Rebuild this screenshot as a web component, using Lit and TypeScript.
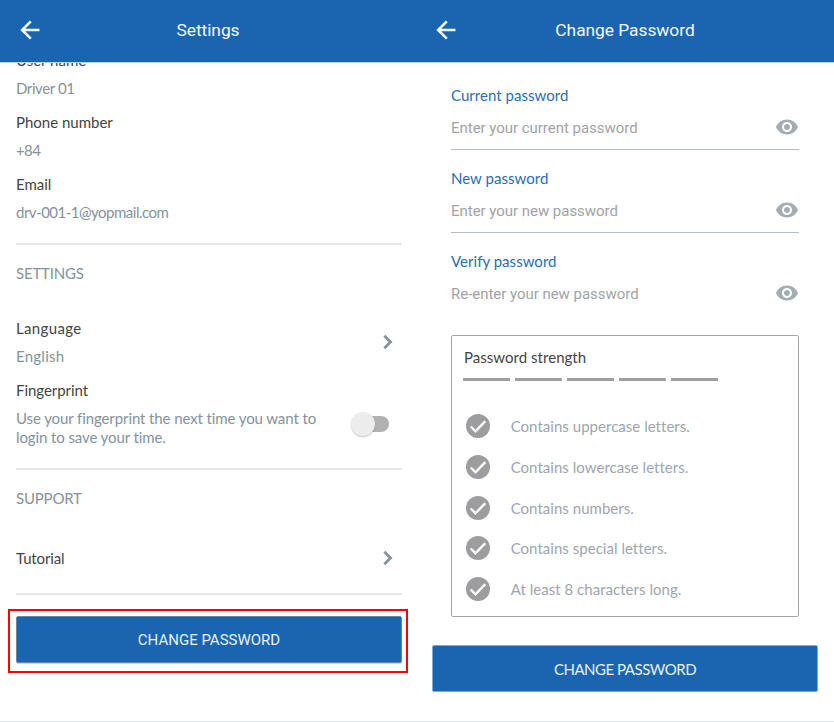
import { LitElement, html, css } from "lit";
import { customElement, property } from "lit/decorators.js";

@customElement("top-bar")
class TopBar extends LitElement {
  @property() heading = "";

  static styles = css`
    :host {
      display: grid;
      grid-template-columns: 60px 1fr 60px;
      align-items: center;
      height: 62px;
      flex: none;
      background: #1b65b0;
      box-shadow: 0 1px 0 #bcd2ea;
      color: #f4f9ff;
      font: 17.4px/24px Roboto, sans-serif;
    }
    .back {
      display: block;
      width: 20px;
      height: 20px;
      margin: -3px 0 0 var(--back-inset, 20px);
    }
    .heading {
      text-align: center;
      margin: -2px 1px 0 0;
      letter-spacing: -0.05px;
    }
  `;

  render() {
    return html`
      <svg class="back" viewBox="0 0 20 20" fill="none" stroke="#f4f9ff" stroke-width="2.6">
        <path d="M19.5 10H2.5M10.8 1.3L2.1 10l8.7 8.7" />
      </svg>
      <div class="heading">${this.heading}</div>
    `;
  }
}

@customElement("password-field")
class PasswordField extends LitElement {
  @property() label = "";
  @property() hint = "";

  static styles = css`
    :host {
      display: block;
      height: 64px;
      font: 15px/20px Lato, sans-serif;
    }
    .label {
      color: #2a6db5;
      letter-spacing: 0.03px;
    }
    .row {
      display: flex;
      justify-content: space-between;
      align-items: center;
      height: 24px;
      margin-top: 11px;
    }
    .hint {
      font: 15px/20px Roboto, sans-serif;
      color: #a3a3a3;
      letter-spacing: -0.03px;
    }
    .eye {
      display: block;
      width: 24px;
      height: 24px;
      margin-top: -2px;
    }
  `;

  render() {
    return html`
      <div class="label">${this.label}</div>
      <div class="row">
        <span class="hint">${this.hint}</span>
        <svg class="eye" viewBox="0 0 24 24" fill="#a3adb2">
          <path
            d="M12 4.5C7 4.5 2.73 7.61 1 12c1.73 4.39 6 7.5 11 7.5s9.27-3.11 11-7.5c-1.73-4.39-6-7.5-11-7.5zM12 17c-2.76 0-5-2.24-5-5s2.24-5 5-5 5 2.24 5 5-2.24 5-5 5zm0-8c-1.66 0-3 1.34-3 3s1.34 3 3 3 3-1.34 3-3-1.34-3-3-3z"
          />
        </svg>
      </div>
    `;
  }
}

const chevron = html`
  <svg class="chevron" viewBox="0 0 10 16" fill="none" stroke="#84929c" stroke-width="2.7">
    <path d="M1.3 1.7L7.6 8l-6.3 6.3" />
  </svg>
`;

@customElement("settings-screen")
class SettingsScreen extends LitElement {
  static styles = css`
    :host {
      display: flex;
      flex-direction: column;
      overflow: hidden;
      font: 15px/20px Lato, sans-serif;
    }
    top-bar {
      position: relative;
      z-index: 1;
    }
    .content {
      margin: -12px 15px 0 16px;
    }
    .label {
      color: #444;
      letter-spacing: 0;
    }
    .value {
      color: #84929e;
      margin: 8px 0 14px;
      letter-spacing: 0.25px;
    }
    .name {
      letter-spacing: -0.4px;
    }
    .phone {
      letter-spacing: -0.6px;
    }
    .email {
      letter-spacing: -0.5px;
    }
    .caps {
      color: #84929e;
      letter-spacing: -0.2px;
    }
    .rule {
      height: 2px;
      background: #e7e7e7;
    }
    .account {
      height: 193px;
    }
    .settings {
      box-sizing: border-box;
      height: 223px;
      padding-top: 18px;
    }
    .support {
      box-sizing: border-box;
      height: 123px;
      padding-top: 18px;
    }
    .item {
      display: flex;
      justify-content: space-between;
      align-items: center;
    }
    .language {
      margin-top: 35px;
      height: 48px;
    }
    .language .label {
      letter-spacing: 0.35px;
    }
    .language .value {
      margin-bottom: 0;
    }
    .fingerprint {
      margin-top: 14px;
      letter-spacing: -0.05px;
    }
    .note {
      line-height: 19px;
      margin: 0;
      width: 320px;
      letter-spacing: -0.1px;
    }
    .option {
      margin-top: 9px;
    }
    .tutorial {
      margin-top: 40px;
    }
    .tutorial .label {
      letter-spacing: -0.15px;
    }
    .chevron {
      width: 10px;
      height: 16px;
      margin: -1px 9.3px 0 0;
    }
    .switch {
      display: flex;
      align-items: center;
      width: 28px;
      height: 16px;
      margin: -8px 13px 0 0;
      border-radius: 8px;
      background: #b1b1b1;
      box-sizing: border-box;
    }
    .knob {
      flex: none;
      width: 24px;
      height: 24px;
      margin-left: -10px;
      border-radius: 50%;
      background: #ececec;
      box-shadow: 0 1px 1.5px rgba(0, 0, 0, 0.22);
    }
    .highlight {
      margin: 14px 9px 0 8px;
      height: 64px;
      box-sizing: border-box;
      border: 2px solid #fb0007;
      padding: 5px 4px 8px 6px;
    }
    .button {
      display: block;
      width: 100%;
      height: 47px;
      padding: 1px 0 0;
      border: 1px solid #6c87a3;
      border-radius: 2px;
      background: #1b65b0;
      color: #e8f1fa;
      font: 15px/20px Roboto, sans-serif;
      box-shadow: 0 1px 1px rgba(0, 0, 0, 0.2);
    }
  `;

  render() {
    return html`
      <top-bar heading="Settings"></top-bar>
      <div class="content">
        <div class="account">
          <div class="label">User name</div>
          <div class="value name">Driver 01</div>
          <div class="label">Phone number</div>
          <div class="value phone">+84</div>
          <div class="label">Email</div>
          <div class="value email">drv-001-1@yopmail.com</div>
        </div>
        <div class="rule"></div>
        <div class="settings">
          <div class="caps">SETTINGS</div>
          <div class="item language">
            <div>
              <div class="label">Language</div>
              <div class="value">English</div>
            </div>
            ${chevron}
          </div>
          <div class="label fingerprint">Fingerprint</div>
          <div class="item option">
            <div class="value note">
              Use your fingerprint the next time you want to<br />login to save your time.
            </div>
            <div class="switch"><div class="knob"></div></div>
          </div>
        </div>
        <div class="rule"></div>
        <div class="support">
          <div class="caps">SUPPORT</div>
          <div class="item tutorial">
            <div class="label">Tutorial</div>
            ${chevron}
          </div>
        </div>
        <div class="rule"></div>
      </div>
      <div class="highlight"><button class="button">CHANGE PASSWORD</button></div>
    `;
  }
}

@customElement("password-screen")
class PasswordScreen extends LitElement {
  static styles = css`
    :host {
      display: flex;
      flex-direction: column;
      font: 15px/20px Lato, sans-serif;
      --back-inset: 19px;
    }
    .form {
      margin: 23px 35px 0 34px;
      display: flex;
      flex-direction: column;
    }
    .underlined {
      border-bottom: 1px solid #b5bdc4;
      margin-bottom: 18px;
    }
    .strength {
      box-sizing: border-box;
      height: 282px;
      margin-top: 20px;
      padding: 11px 12px 0;
      border: 1px solid #a5a5a5;
      border-radius: 2px;
    }
    .title {
      color: #444;
      letter-spacing: 0.03px;
    }
    .bars {
      display: grid;
      grid-template-columns: repeat(5, 47px);
      gap: 4.8px;
      margin: 11px 0 0 -0.6px;
    }
    .bar {
      height: 3px;
      background: #a0a0a0;
    }
    .rules {
      list-style: none;
      margin: 25px 0 0;
      padding: 0;
    }
    .rule {
      display: flex;
      align-items: center;
      height: 40.7px;
      color: #a0a5ae;
      letter-spacing: 0.03px;
    }
    .check {
      width: 24px;
      height: 24px;
      margin: 0 21px 0 1.7px;
    }
    .button {
      height: 47px;
      margin: 28px 16px 0 15px;
      padding: 0;
      border: 1px solid #7fa8d4;
      border-radius: 2px;
      background: #1b65b0;
      color: #e8f1fa;
      font: 15px/20px Lato, sans-serif;
      letter-spacing: -0.48px;
    }
  `;

  render() {
    const rules = [
      "Contains uppercase letters.",
      "Contains lowercase letters.",
      "Contains numbers.",
      "Contains special letters.",
      "At least 8 characters long.",
    ];
    return html`
      <top-bar heading="Change Password"></top-bar>
      <div class="form">
        <password-field class="underlined" label="Current password" hint="Enter your current password"></password-field>
        <password-field class="underlined" label="New password" hint="Enter your new password"></password-field>
        <password-field label="Verify password" hint="Re-enter your new password"></password-field>
        <div class="strength">
          <div class="title">Password strength</div>
          <div class="bars">${rules.map(() => html`<div class="bar"></div>`)}</div>
          <ul class="rules">
            ${rules.map(
              (text) => html`
                <li class="rule">
                  <svg class="check" viewBox="0 0 24 24">
                    <circle cx="12" cy="12" r="12" fill="#9d9d9f" />
                    <path d="M4.7 12.5l4.8 4.8L19.3 7.2" fill="none" stroke="#fff" stroke-width="2.4" />
                  </svg>
                  <span>${text}</span>
                </li>
              `
            )}
          </ul>
        </div>
      </div>
      <button class="button">CHANGE PASSWORD</button>
    `;
  }
}

@customElement("app-root")
class AppRoot extends LitElement {
  static styles = css`
    :host {
      display: grid;
      grid-template-columns: 417px 417px;
      box-sizing: border-box;
      width: 834px;
      height: 722px;
      overflow: hidden;
      background: #fff;
      border-bottom: 1px solid #dfe6f0;
    }
  `;

  render() {
    return html`
      <settings-screen></settings-screen>
      <password-screen></password-screen>
    `;
  }
}
